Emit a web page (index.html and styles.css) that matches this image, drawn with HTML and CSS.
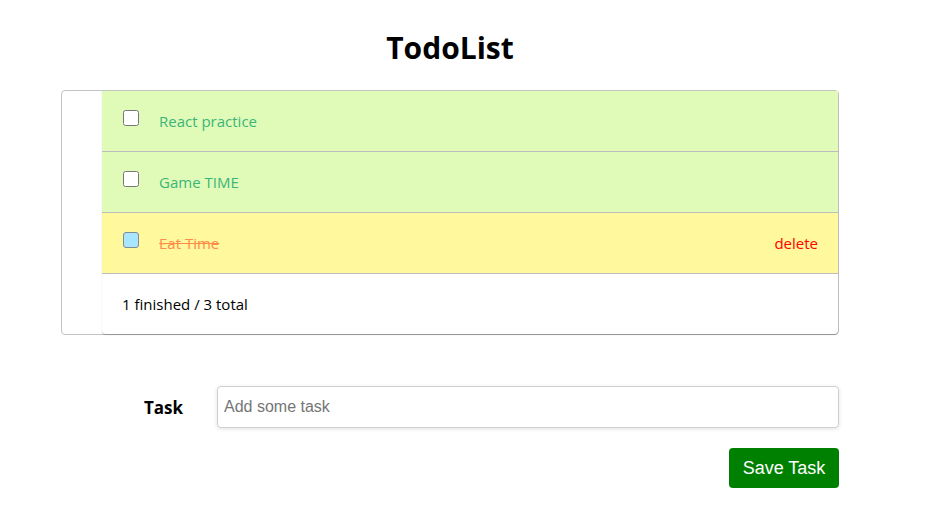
FILE: index.html
```html
<!DOCTYPE html>
<html>
<head>
<meta charset="utf-8">
<link rel="stylesheet" href="styles.css">
</head>
<body>
<div class="app">
  <h1 class="title">TodoList</h1>
  <div class="card">
    <ul class="list">
      <li class="item">
        <input type="checkbox" class="check">
        <span class="text">React practice</span>
      </li>
      <li class="item">
        <input type="checkbox" class="check">
        <span class="text">Game TIME</span>
      </li>
      <li class="item done">
        <span class="check fake"></span>
        <span class="text">Eat Time</span>
        <span class="delete">delete</span>
      </li>
      <li class="footer">1 finished / 3 total</li>
    </ul>
  </div>
  <form class="form">
    <label class="label">Task</label>
    <input class="input" type="text" placeholder="Add some task">
    <div class="actions"><button type="button" class="btn">Save Task</button></div>
  </form>
</div>
</body>
</html>
```

FILE: styles.css
```css
* { box-sizing: border-box; }
body {
  margin: 0;
  font-family: "Open Sans", "Noto Sans", sans-serif;
  color: #000;
  background: #fff;
}
.app {
  width: 778px;
  margin-left: 61px;
}
.title {
  margin: 0;
  padding-top: 28px;
  height: 90px;
  text-align: center;
  font-size: 30px;
  font-weight: 700;
  line-height: 40px;
}
.card {
  border: 1px solid #c3c3c3;
  border-radius: 4px;
}
.list {
  list-style: none;
  margin: 0 0 0 40px;
  padding: 0;
  border-radius: 0 0 4px 4px;
  box-shadow: 0 1px 1px rgba(0,0,0,0.25);
}
.item {
  display: flex;
  align-items: center;
  height: 61px;
  padding: 0 20px 0 20px;
  background: #dffbb7;
  border-bottom: 1px solid #bdbdbd;
  font-size: 15px;
  color: #3cb57a;
}
.item.done {
  background: #fff89c;
  color: #ff8a4a;
}
.check {
  width: 16px;
  height: 16px;
  margin: 0 0 6px 1px;
  flex: none;
}
.fake {
  display: inline-block;
  background: #a8e6ff;
  border: 1px solid #7e8c94;
  border-radius: 3px;
}
.text {
  margin-left: 20px;
  flex: 1;
}
.done .text { text-decoration: line-through; }
.delete {
  color: #ff0000;
  font-size: 15px;
}
.footer {
  height: 60px;
  display: flex;
  align-items: center;
  padding-left: 20px;
  font-size: 15px;
}
.form {
  display: grid;
  grid-template-columns: 156px 1fr;
  margin-top: 51px;
  row-gap: 20px;
  align-items: center;
}
.label {
  text-align: right;
  padding-right: 34px;
  font-weight: 700;
  font-size: 17px;
}
.input {
  height: 42px;
  border: 1px solid #cfcfcf;
  border-radius: 4px;
  box-shadow: 0 1px 4px rgba(0,0,0,0.12);
  padding: 0 6px;
  font-family: "Liberation Sans", Arial, sans-serif;
  font-size: 16px;
}
.input::placeholder { color: #757575; }
.actions {
  grid-column: 1 / 3;
  display: flex;
  justify-content: flex-end;
}
.btn {
  width: 110px;
  height: 40px;
  background: #008000;
  color: #fff;
  border: none;
  border-radius: 4px;
  font-family: "Liberation Sans", Arial, sans-serif;
  font-size: 18px;
}
```
